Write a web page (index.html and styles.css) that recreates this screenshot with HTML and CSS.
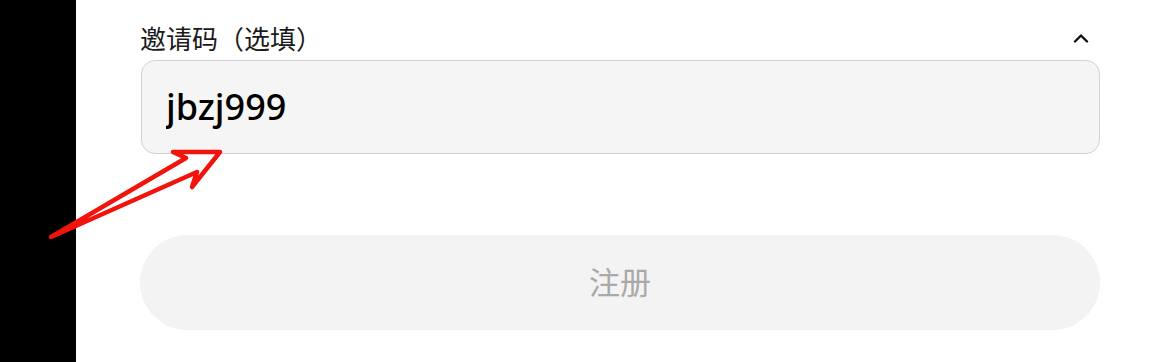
FILE: index.html
```html
<!DOCTYPE html>
<html lang="zh-CN">

<head>
    <meta charset="UTF-8">
    <meta name="viewport" content="width=device-width, initial-scale=1.0">
    <title>注册</title>
    <link rel="stylesheet" href="styles.css">
</head>

<body>
    <div class="page">
        <div class="side"></div>
        <form class="main" id="registerForm">
            <div class="field-head">
                <label for="invite" class="field-label">邀请码（选填）</label>
                <svg class="chevron" width="16" height="10" viewBox="0 0 16 10">
                    <path d="M2 8.5 L8 2.5 L14 8.5" fill="none" stroke="#111" stroke-width="2.4" stroke-linecap="round" stroke-linejoin="round" />
                </svg>
            </div>
            <input type="text" id="invite" name="invite" class="field-input" value="jbzj999">
            <div class="btn-row">
                <button type="submit" class="btn-submit" disabled>注册</button>
            </div>
        </form>
    </div>

    <!-- hand drawn annotation arrow -->
    <svg class="annotation" width="1172" height="362" viewBox="0 0 1172 362">
        <polygon points="51,237 186,158 173,152 220,152 192,187 197,172"
            fill="none" stroke="#f2140c" stroke-width="4.5" stroke-linejoin="round" stroke-linecap="round" />
    </svg>
</body>

</html>
```

FILE: styles.css
```css
html,
body {
    margin: 0;
    height: 100%;
    background-color: #fff;
}

body {
    font-family: "Noto Sans", "Noto Sans CJK SC", sans-serif;
    color: #111;
    position: relative;
    overflow: hidden;
}

.page {
    display: flex;
    height: 362px;
}

.side {
    width: 76px;
    flex-shrink: 0;
    background-color: #000;
}

.main {
    flex: 1;
    padding: 20px 72px 0 64px;
    margin: 0;
}

.field-head {
    display: flex;
    align-items: center;
    justify-content: space-between;
    height: 36px;
    margin-bottom: 4px;
}

.field-label {
    font-family: "Noto Sans CJK SC", sans-serif;
    font-size: 26px;
    line-height: 36px;
    color: #1a1a1a;
}

.chevron {
    margin-right: 11px;
}

.field-input {
    display: block;
    box-sizing: border-box;
    width: 959px;
    height: 94px;
    margin-left: 1px;
    padding: 0 24px 2px 24px;
    border: 1.5px solid #d2d2d2;
    border-radius: 14px;
    background-color: #f5f5f5;
    font-family: "Noto Sans", "Noto Sans CJK SC", sans-serif;
    font-size: 36px;
    font-weight: 500;
    color: #000;
    outline: none;
}

.btn-row {
    margin-top: 81px;
}

.btn-submit {
    display: block;
    width: 960px;
    height: 95px;
    border: none;
    border-radius: 48px;
    background-color: #f3f3f3;
    font-family: "Noto Sans CJK SC", sans-serif;
    font-size: 31px;
    color: #a9a9a9;
    padding: 0 0 4px 0;
}

.annotation {
    position: absolute;
    left: 0;
    top: 0;
    pointer-events: none;
}
```
